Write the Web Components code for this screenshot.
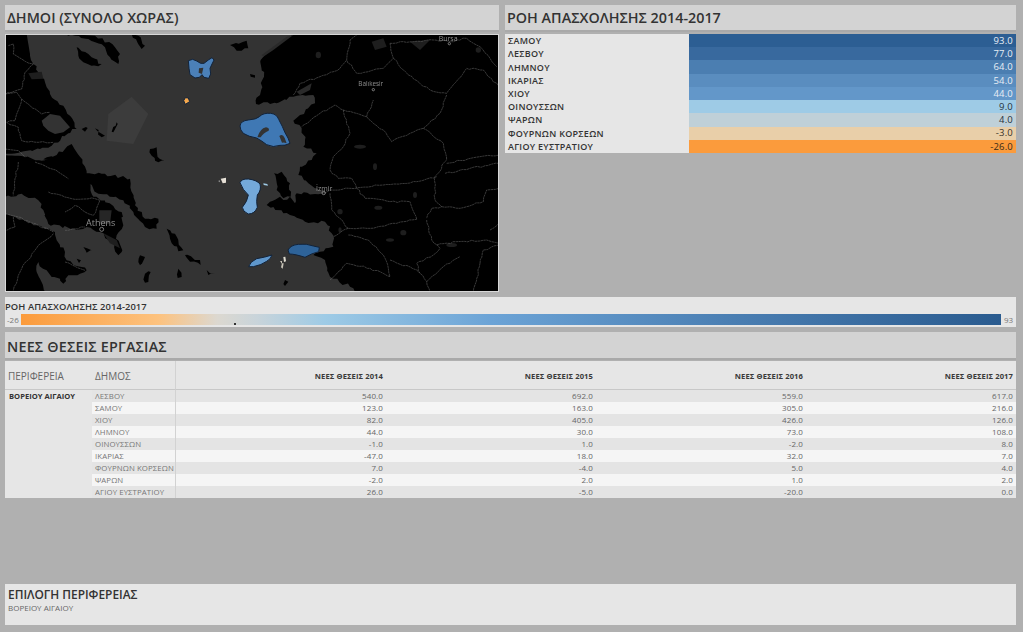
<!DOCTYPE html>
<html lang="el"><head><meta charset="utf-8"><title>Dashboard</title>
<style>
html,body{margin:0;height:632px;overflow:hidden;background:#b0b0b0;font-family:"Open Sans","Noto Sans",sans-serif}
</style></head><body>
<dash-board></dash-board>
<template id="map-t"><style>
:host{display:block;height:258px;box-sizing:border-box;border:1px solid #d8d8d8;background:#333;overflow:hidden}
svg{display:block;width:100%;height:100%;filter:blur(.35px)}
.land{fill:#000}
.b{fill:none;stroke:#6a6a6a;stroke-width:1.6;stroke-linejoin:round;stroke-dasharray:7 1.5}
text{font-family:"Open Sans",sans-serif;fill:#8f8f8f;font-size:21px}
.c{fill:none;stroke:#8f8f8f;stroke-width:2.5}
.i{stroke:#12233a;stroke-width:3;stroke-linejoin:round}
.g{fill:#333}
.p{fill:#1e1e1e}
</style>
<svg viewBox="18 105 1476 768" preserveAspectRatio="none" role="img" aria-label="map">
<polygon points="325,342 395,290 445,342 400,432 320,422" fill="#3c3c3c"/>
<g class="land" data-r="5">
<polygon points="15,102 80,102 90,162 100,192 125,232 150,282 190,317 210,347 230,387 205,400 155,437 120,447 65,455 15,462"/>
<polygon points="15,466 65,468 125,482 175,472 215,486 260,531 280,590 340,618 365,636 370,676 350,706 365,756 355,766 335,726 300,696 260,681 230,690 145,672 130,630 115,601 65,581 15,591"/>
<polygon points="130,478 170,465 215,432 240,470 260,520 305,521 390,536 405,616 435,656 475,656 470,686 435,681 400,636 370,601 295,581 210,500"/>
<polygon points="15,641 45,651 115,676 165,696 170,721 195,756 200,781 245,801 260,811 240,821 205,826 190,851 180,836 155,831 140,811 115,786 110,816 130,861 140,876 15,876"/>
<polygon points="230,142 265,162 305,192 295,199 250,187 235,167"/>
<polygon points="195,102 285,107 345,142 360,162 355,192 330,172 315,142 265,117"/>
<polygon points="395,102 415,107 435,137 425,147"/>
<polygon points="690,135 740,122 745,145 710,152"/>
<polygon points="750,222 765,226 765,233 752,230"/>
<polygon points="450,447 470,442 480,477 493,482 475,487 455,467"/>
<polygon points="245,387 263,384 255,395"/>
<polygon points="285,385 315,407 305,412"/>
<polygon points="335,395 350,367 353,372 340,397"/>
<polygon points="500,686 525,701 550,751 535,754 510,716"/>
<polygon points="555,765 600,780 602,795 570,785"/>
<polygon points="420,766 435,771 420,796 415,786"/>
<polygon points="435,821 452,816 445,846 435,848"/>
<polygon points="535,806 545,831 533,834"/>
<polygon points="620,810 645,820 625,825"/>
<polygon points="250,741 275,751 260,758"/>
<polygon points="230,776 243,781 237,789"/>
<polygon points="855,840 865,845 855,858"/>
<polygon points="822,520 845,515 870,550 872,590 850,595 830,570"/>
<polygon points="880,102 800,160 782,180 792,230 768,312 830,310 880,290 940,285 945,310 900,345 880,362 905,385 915,420 910,440 950,460 935,480 900,500 895,525 925,550 945,565 960,572 978,578 945,582 890,580 885,610 870,590 850,600 840,590 810,605 800,615 850,640 870,645 915,665 975,665 995,700 1000,740 960,755 940,765 975,780 990,830 1060,865 1065,876 1497,876 1497,102"/>
</g>
<polygon class="g" points="125,362 150,342 180,347 210,382 190,397 165,402 145,392 130,377"/>
<g class="p">
<polygon points="785,165 860,110 880,105 820,150 790,170" style="fill:#2a2a2a"/>
<polygon points="1115,125 1150,115 1160,140 1125,150"/>
<polygon points="1230,125 1290,120 1260,150"/>
<polygon points="85,220 125,215 130,236 95,238"/>
<polygon points="890,275 935,250 930,270 900,285" style="fill:#2a2a2a"/>
<polygon points="298,631 335,631 330,671 298,671" style="fill:#262626"/>
<polygon points="310,700 350,720 360,745 330,730"/>
<ellipse cx="1135" cy="623" rx="12" ry="6"/><ellipse cx="1020" cy="635" rx="8" ry="8"/><ellipse cx="1245" cy="585" rx="6" ry="9"/><ellipse cx="1210" cy="698" rx="9" ry="8"/><ellipse cx="1170" cy="720" rx="12" ry="5"/><ellipse cx="1355" cy="735" rx="16" ry="6"/><ellipse cx="1080" cy="440" rx="18" ry="6"/>
<ellipse cx="1125" cy="500" rx="6" ry="10"/><ellipse cx="1020" cy="690" rx="5" ry="8"/><ellipse cx="1435" cy="150" rx="8" ry="8"/><ellipse cx="955" cy="165" rx="8" ry="10"/>
</g>
<g class="b" data-r="2.5">
<polyline points="25,137 40,132 40,162 65,177 100,192"/>
<polyline points="100,192 75,217 65,267 15,282"/>
<polyline points="15,282 50,277 70,302 125,342 150,337"/>
<polyline points="65,297 45,362 20,367"/>
<polyline points="20,367 55,382 65,422 115,427 160,427"/>
<polyline points="15,447 55,452 75,472"/>
<polyline points="55,486 45,536 40,586"/>
<polyline points="105,486 175,516 205,536"/>
<polyline points="145,576 215,596 285,596 300,601 280,646 255,636 225,616 195,636"/>
<polyline points="15,641 55,651 115,676 160,696"/>
<polyline points="160,701 115,736 65,806 40,871"/>
<polyline points="40,651 45,681 20,691"/>
<polyline points="195,691 255,681"/>
<polyline points="195,786 255,811"/>
<polyline points="1170,130 1210,125 1240,125 1300,120 1350,125 1400,115 1440,140 1470,175 1490,200"/>
<polyline points="1170,130 1180,175 1150,205 1070,220 1040,180 1050,120 1070,105"/>
<polyline points="880,285 900,250 960,230 1020,205 1040,180"/>
<polyline points="1180,175 1210,210 1260,250 1290,270 1340,280 1400,205 1450,210 1497,260"/>
<polyline points="1340,285 1320,340 1270,385 1330,430 1340,480 1305,530 1305,600 1325,620 1295,625 1280,655"/>
<polyline points="1270,385 1230,400 1175,425 1150,390 1120,370 1100,350 1120,300"/>
<polyline points="1100,350 1030,330 1005,315 960,340 905,380"/>
<polyline points="1030,330 1050,400 1030,440 1000,470 990,510 1015,535 1055,535 1070,565"/>
<polyline points="1340,490 1440,470 1497,465"/>
<polyline points="1335,520 1410,505 1497,490"/>
<polyline points="975,580 990,570 1050,565 1150,555 1250,545 1310,530"/>
<polyline points="990,580 995,630 1045,685 1000,710"/>
<polyline points="1045,685 1110,685 1190,670 1250,658"/>
<polyline points="1070,565 1095,595 1110,595 1170,605 1230,605 1250,658"/>
<polyline points="1325,620 1380,625 1450,605 1460,570 1497,565"/>
<polyline points="1045,705 1105,720 1150,765 1165,805 1170,830 1110,805 1040,790 990,840"/>
<polyline points="1170,780 1250,810 1260,820"/>
<polyline points="1280,660 1295,720 1320,745 1300,765 1250,790 1260,820 1280,845 1290,875"/>
<polyline points="1280,845 1330,800 1380,770"/>
<polyline points="1310,735 1370,725 1460,720 1497,730"/>
<polyline points="1470,690 1497,670"/>
<polyline points="1440,790 1450,750 1497,735"/>
<polyline points="1440,790 1420,876"/>
</g>
<g>
<polygon class="i" fill="#4b80b8" points="565,182 578,178 590,183 602,190 612,190 625,180 636,173 642,180 636,192 630,205 632,222 626,235 612,232 606,224 598,232 585,234 570,224 567,205"/>
<polygon class="g" points="597,205 610,203 606,222 596,218"/>
<polygon class="i" fill="#f6a84c" points="551,302 556,293 565,294 569,305 556,313"/>
<path class="i" fill="#3f78b4" d="M720 378 Q722 362 745 360 Q770 358 778 350 Q790 338 812 340 Q830 342 836 358 Q848 380 855 398 Q866 415 870 430 Q855 438 840 436 Q820 444 800 434 Q785 422 770 414 Q745 410 730 400 Q720 390 720 378Z"/>
<path class="g" d="M772 412 Q780 386 798 382 Q810 384 806 392 Q790 398 782 412Z"/>
<path class="g" d="M838 408 Q848 400 854 414 L860 430 Q852 426 846 428Z"/>
<path class="i" fill="#74a9da" d="M720 548 Q724 536 745 537 Q770 540 780 552 Q785 570 772 585 Q768 605 772 622 Q764 642 745 642 Q728 635 727 622 Q742 605 745 585 Q728 570 720 548Z"/>
<polygon fill="#9fcbe6" points="790,550 802,552 804,557 791,555"/>
<path class="i" fill="#5e96cb" d="M746 800 Q750 785 770 776 Q795 772 816 765 Q812 778 800 784 Q785 795 760 800Z"/>
<path class="i" fill="#2e6399" d="M864 750 Q872 735 895 733 Q920 730 940 738 L958 742 L956 755 Q935 760 915 772 Q885 762 868 762Z"/>
<polygon fill="#e6e0d6" points="662,536 678,533 678,548 668,550"/>
<polygon fill="#bbb" points="655,543 659,541 659,547"/>
<polygon fill="#e0dcd0" points="850,771 856,770 858,784 852,786"/>
<polygon fill="#c8c4b8" points="840,783 846,783 846,792"/>
<polygon fill="#c8c4b8" points="846,790 851,790 848,806 843,802"/>
</g>
<text x="1316" y="122">Bursa</text><circle class="c" cx="1348" cy="131" r="3.5"/>
<text x="1075" y="259" style="font-size:19px">Balıkesir</text><circle class="c" cx="1120" cy="269" r="3.5"/>
<text x="948" y="572" style="font-size:21px">İzmir</text><circle class="c" cx="971" cy="579" r="5"/>
<text x="258" y="678" style="font-size:27px">Athens</text><circle class="c" cx="305" cy="688" r="6"/>
</svg></template>

<script>
function make(name,css,html,setup){
  customElements.define(name,class extends HTMLElement{
    constructor(){super();const r=this.attachShadow({mode:'open'});
      r.innerHTML='<style>'+css+'</style>'+html;if(setup)setup(r,this);}
  });
}
make('panel-title',
 ':host{display:flex;align-items:center;height:27px;box-sizing:border-box;background:#d3d3d3;border-bottom:2px solid #a9a9a9;padding:1px 2px 0;color:#333;font:600 14.35px/1 "Open Sans",sans-serif;white-space:nowrap}',
 '<slot></slot>');
function rough(pts,amp,seed){
  let s=seed;const rnd=()=>{s=(s*16807)%2147483647;return s/2147483647-.5;};
  const out=[];
  for(let i=0;i<pts.length;i++){
    const a=pts[i],b=pts[(i+1)%pts.length];
    if(i===pts.length-1&&!rough.closed)break;
    const d=Math.hypot(b[0]-a[0],b[1]-a[1]),n=Math.max(1,Math.round(d/11));
    for(let k=0;k<n;k++){
      const t=k/n,edge=a[0]<=15||a[0]>=1497||a[1]<=102||a[1]>=876;
      const j=k&&!edge?amp:0;
      out.push([a[0]+(b[0]-a[0])*t+rnd()*j*2,a[1]+(b[1]-a[1])*t+rnd()*j*2]);
    }
  }
  if(!rough.closed)out.push(pts[pts.length-1]);
  return out;
}
customElements.define('aegean-map',class extends HTMLElement{
  constructor(){super();const r=this.attachShadow({mode:'open'});
    r.appendChild(document.getElementById('map-t').content.cloneNode(true));
    let seed=4711;
    r.querySelectorAll('[data-r]').forEach(g=>{const amp=+g.dataset.r;
      g.querySelectorAll('polygon,polyline').forEach(p=>{
        const pts=p.getAttribute('points').trim().split(/\s+/).map(q=>q.split(',').map(Number));
        rough.closed=p.tagName==='polygon';seed+=97;
        p.setAttribute('points',rough(pts,amp,seed).map(q=>q[0].toFixed(1)+','+q[1].toFixed(1)).join(' '));
      });});
  }
});
const flow=[['ΣΑΜΟΥ','93.0','#2c5e93','#e8eef5'],['ΛΕΣΒΟΥ','77.0','#38699e','#e8eef5'],['ΛΗΜΝΟΥ','64.0','#4b7eb1','#e8eef5'],['ΙΚΑΡΙΑΣ','54.0','#5a8dbf','#e8eef5'],['ΧΙΟΥ','44.0','#6397c9','#e8eef5'],['ΟΙΝΟΥΣΣΩΝ','9.0','#9ecbe6','#26323c'],['ΨΑΡΩΝ','4.0','#bfd0d8','#26323c'],['ΦΟΥΡΝΩΝ ΚΟΡΣΕΩΝ','-3.0','#e9cfa9','#3a3228'],['ΑΓΙΟΥ ΕΥΣΤΡΑΤΙΟΥ','-26.0','#fb9b3c','#3a2a18']];
make('flow-table',
 ':host{display:grid;grid-template-columns:184px 1fr;grid-auto-rows:1fr;height:119px;background:#e6e6e6;font:9px/1 "Open Sans",sans-serif}'+
 '.n{display:flex;align-items:center;padding-left:3px;font-weight:600;color:#333;letter-spacing:.28px}'+
 '.v{display:flex;align-items:center;justify-content:flex-end;padding-right:3px;font-size:9.5px;letter-spacing:.2px}',
 '',r=>{r.innerHTML+=flow.map(f=>`<div class="n">${f[0]}</div><div class="v" style="background:${f[2]};color:${f[3]}">${f[1]}</div>`).join('');});
make('color-legend',
 ':host{display:block;height:30px;box-sizing:border-box;background:#e6e6e6;padding-top:4px;font-family:"Open Sans",sans-serif;position:relative}'+
 '.t{font:600 9.4px/11px "Open Sans",sans-serif;color:#333;letter-spacing:.08px;white-space:nowrap}'+
 '.r{display:flex;align-items:center;height:11px;margin-top:2px;font-size:8px;color:#777}'+
 '.l{width:16px;box-sizing:border-box;padding-left:2px}.e{width:15px;box-sizing:border-box;padding-left:3px}'+
 '.b{flex:1;height:11px;background:linear-gradient(90deg,#fb9b3c 0%,#fdc27e 14%,#dcd8d0 20%,#c9d4da 24%,#9ecbe6 31%,#6ba3d6 48%,#4b7fb3 72%,#2a5b8f 100%)}'+
 '.m{position:absolute;left:229px;top:26px;width:2px;height:2px;background:#333}',
 '<div class="t"><slot></slot></div><div class="r"><span class="l">-26</span><div class="b"></div><span class="e">93</span></div><div class="m"></div>');
const rows=[['ΛΕΣΒΟΥ','540.0','692.0','559.0','617.0'],['ΣΑΜΟΥ','123.0','163.0','305.0','216.0'],['ΧΙΟΥ','82.0','405.0','426.0','126.0'],['ΛΗΜΝΟΥ','44.0','30.0','73.0','108.0'],['ΟΙΝΟΥΣΣΩΝ','-1.0','1.0','-2.0','8.0'],['ΙΚΑΡΙΑΣ','-47.0','18.0','32.0','7.0'],['ΦΟΥΡΝΩΝ ΚΟΡΣΕΩΝ','7.0','-4.0','5.0','4.0'],['ΨΑΡΩΝ','-2.0','2.0','1.0','2.0'],['ΑΓΙΟΥ ΕΥΣΤΡΑΤΙΟΥ','26.0','-5.0','-20.0','0.0']];
make('jobs-table',
 ':host{display:grid;grid-template-columns:87px 84px repeat(4,1fr);grid-template-rows:29px repeat(9,12px);background:#e6e6e6;font:8px/12px "Open Sans",sans-serif;color:#666}'+
 '.h{display:flex;align-items:center;border-bottom:1px solid #c8c8c8;box-sizing:border-box;padding:2px 3px 0;white-space:nowrap}'+
 '.d{font-size:10px;color:#666}.y{justify-content:flex-end;font-weight:700;font-size:7.6px;color:#3a3a3a;letter-spacing:.1px}'+
 '.p{grid-row:2/span 9;padding:0 4px;font-weight:700;font-size:7.6px;color:#333;white-space:nowrap}'+
 '.c{padding:0 3px;white-space:nowrap;text-align:right;letter-spacing:.1px}.c.a{text-align:left;color:#777;font-size:7.8px}'+
 '.s{border-right:1px solid #d2d2d2}.o{background:#e4e4e4}.w{background:#f5f5f5}',
 '',r=>{
   let h='<div class="h d">ΠΕΡΙΦΕΡΕΙΑ</div><div class="h d s">ΔΗΜΟΣ</div>'+[2014,2015,2016,2017].map(y=>`<div class="h y">ΝΕΕΣ ΘΕΣΕΙΣ ${y}</div>`).join('');
   h+='<div class="p">ΒΟΡΕΙΟΥ ΑΙΓΑΙΟΥ</div>';
   rows.forEach((x,i)=>{const k=i%2?'w':'o';h+=x.map((t,j)=>`<div class="c ${k}${j?'':' a s'}">${t}</div>`).join('');});
   r.innerHTML+=h;});
make('filter-box',
 ':host{display:block;height:41px;box-sizing:border-box;background:#e6e6e6;padding:3px 2px 0 3px}'+
 '.t{font:600 11.9px/15px "Open Sans",sans-serif;color:#333;white-space:nowrap}'+
 '.v{font:8px/11px "Open Sans",sans-serif;color:#666}',
 '<div class="t"><slot name="title"></slot></div><div class="v"><slot></slot></div>');
make('dash-board',
 ':host{display:flex;flex-direction:column;height:632px;box-sizing:border-box;padding:5px 7px 7px 5px}'+
 '.top{display:grid;grid-template-columns:494px 511px;column-gap:6px;height:287px}'+
 '.col{display:flex;flex-direction:column;gap:2px;align-items:stretch}'+
 '.leg{margin-top:5px}.sec{margin-top:5px;display:flex;flex-direction:column;gap:1px}.end{margin-top:auto}'+
 '.tall{height:28px;letter-spacing:.2px;padding-top:4px}',
 `<div class="top"><div class="col"><panel-title>ΔΗΜΟΙ (ΣΥΝΟΛΟ ΧΩΡΑΣ)</panel-title><aegean-map></aegean-map></div>
  <div class="col"><panel-title>ΡΟΗ ΑΠΑΣΧΟΛΗΣΗΣ 2014-2017</panel-title><flow-table></flow-table></div></div>
  <color-legend class="leg">ΡΟΗ ΑΠΑΣΧΟΛΗΣΗΣ 2014-2017</color-legend>
  <div class="sec"><panel-title class="tall">ΝΕΕΣ ΘΕΣΕΙΣ ΕΡΓΑΣΙΑΣ</panel-title><jobs-table></jobs-table></div>
  <filter-box class="end"><span slot="title">ΕΠΙΛΟΓΗ ΠΕΡΙΦΕΡΕΙΑΣ</span>ΒΟΡΕΙΟΥ ΑΙΓΑΙΟΥ</filter-box>`);
</script>
</body></html>
